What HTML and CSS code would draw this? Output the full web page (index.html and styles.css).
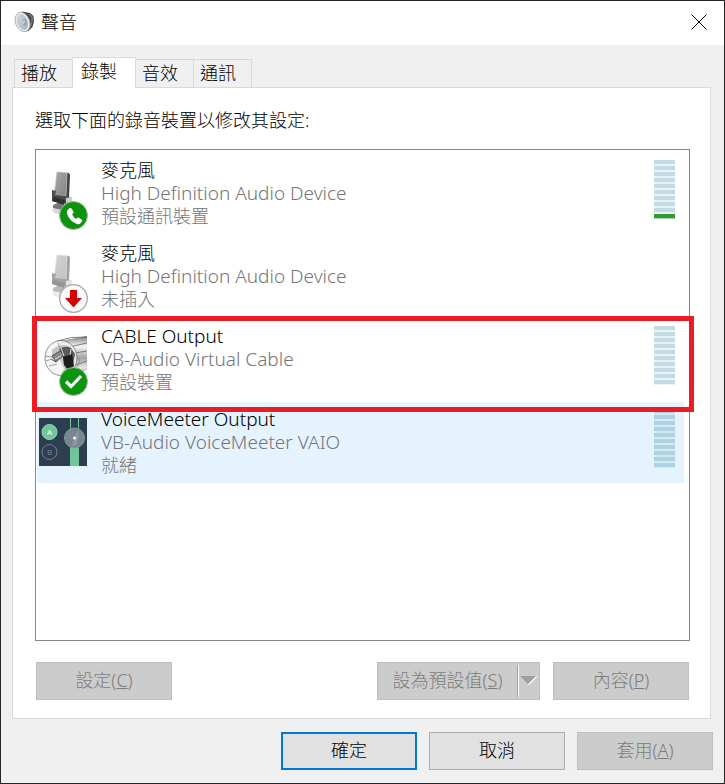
FILE: index.html
```html
<!DOCTYPE html>
<html lang="zh-Hant">
<head>
<meta charset="utf-8">
<meta name="viewport" content="width=device-width, initial-scale=1">
<title>聲音</title>
<link rel="stylesheet" href="styles.css">
</head>
<body>
<svg class="defs" aria-hidden="true">
  <defs>
    <linearGradient id="metal" x1="0" y1="0" x2="1" y2="1"><stop offset="0" stop-color="#a8a8a8"/><stop offset="1" stop-color="#858585"/></linearGradient>
    <linearGradient id="cone" x1="0" y1="0" x2="1" y2="1"><stop offset="0" stop-color="#d3dde3"/><stop offset="1" stop-color="#9db0bb"/></linearGradient>
    <linearGradient id="pipe" x1="0" y1="0" x2="0" y2="1"><stop offset="0" stop-color="#777"/><stop offset=".25" stop-color="#f5f5f5"/><stop offset=".55" stop-color="#a5a5a5"/><stop offset=".8" stop-color="#e6e6e6"/><stop offset="1" stop-color="#555"/></linearGradient>
    <symbol id="mic" viewBox="0 0 48 48">
      <path d="M13 40l8-3 8 4-3 5-11-2z" fill="#d8d8d8"/>
      <path d="M14 36l7-3 4 3-2 5-4-1-5-1z" fill="#777"/>
      <path d="M18 3l12 1 1 2-1 23H16z" fill="#444"/>
      <path d="M18 3l10 1-1 23-12-1z" fill="url(#metal)" stroke="#ccc" stroke-width=".7"/>
      <path d="M13 21l4 1-1 4 11 1 6 2v5l-6 1-14-3z" fill="#4c4c4c"/>
      <path d="M15 28l11 3-1 5-12-4z" fill="#303030"/>
      <path d="M27 29l6-1v5l-6 1z" fill="#ccc"/>
    </symbol>
  </defs>
</svg>
<main class="window">
  <header class="titlebar">
    <svg class="titlebar-icon" viewBox="0 0 22 24" aria-hidden="true">
      <path d="M8 1.500l8 1.500 3.500 3 .5 6-1.500 5-4 4-5 1z" fill="#4b4b4b"/>
      <path d="M15 4l3 3v5l-3 7" fill="none" stroke="#8b8b8b"/>
      <ellipse cx="8.500" cy="12" rx="7" ry="10" transform="rotate(-20 8.500 12)" fill="#f1f1f1" stroke="#a6a6a6" stroke-width=".8"/>
      <ellipse cx="8.300" cy="12" rx="5.400" ry="8.200" transform="rotate(-20 8.300 12)" fill="url(#cone)"/>
      <ellipse cx="10.500" cy="12.500" rx="2.200" ry="3" fill="#8da0ac"/>
      <path d="M8 11l4 0-3 4z" fill="#c6d3da"/>
    </svg>
    <h1 class="title">聲音</h1>
    <button class="close" type="button" aria-label="關閉">
      <svg viewBox="0 0 16 16" aria-hidden="true"><path d="M.5 .5l15 15M15.500 .5l-15 15" stroke="#000"/></svg>
    </button>
  </header>
  <div class="content">
    <div class="tabs" role="tablist">
      <button class="tab" type="button" role="tab">播放</button>
      <button class="tab tab-active" type="button" role="tab" aria-selected="true">錄製</button>
      <button class="tab" type="button" role="tab">音效</button>
      <button class="tab" type="button" role="tab">通訊</button>
    </div>
    <section class="panel" role="tabpanel">
      <p class="prompt" id="prompt">選取下面的錄音裝置以修改其設定:</p>
      <ul class="devices" role="listbox" aria-labelledby="prompt">
        <li class="device" role="option">
          <div class="picture">
            <svg class="device-icon" viewBox="0 0 48 48" aria-hidden="true"><use href="#mic"/></svg>
            <svg class="badge" viewBox="0 0 30 30" aria-hidden="true">
              <circle cx="14.500" cy="14.500" r="14" fill="#0c930f" stroke="#a9b9a9"/>
              <path d="M8.400 9.200l2.300-2.100q1-.6 1.800.4l2 3q.5 1-.3 1.800l-1.100 1.100q1.200 2.900 4 4.500l1.300-1.100q.8-.6 1.700 0l2.700 2q.9.8.2 1.700l-1.800 2.100q-1.200 1.100-3.300.3-7.500-2.800-9.900-10.200-.6-2 .4-3.500z" fill="#fff"/>
            </svg>
          </div>
          <div class="text"><span class="name">麥克風</span><span class="latin">High Definition Audio Device</span><span>預設通訊裝置</span></div>
          <div class="meter meter-live"><i></i><i></i><i></i><i></i><i></i><i></i><i></i><i></i><i></i><i></i></div>
        </li>
        <li class="device" role="option">
          <div class="picture">
            <svg class="device-icon faded" viewBox="0 0 48 48" aria-hidden="true"><use href="#mic"/></svg>
            <svg class="badge" viewBox="0 0 30 30" aria-hidden="true">
              <circle cx="14.500" cy="14.500" r="13.800" fill="#fafafa" stroke="#a8a8a8" stroke-width="1.300"/>
              <path d="M11 6h7v8h5l-8.500 9.500L6 14h5z" fill="#d90000"/>
            </svg>
          </div>
          <div class="text"><span class="name">麥克風</span><span class="latin">High Definition Audio Device</span><span>未插入</span></div>
        </li>
        <li class="device device-marked" role="option">
          <div class="picture">
            <svg class="device-icon" viewBox="0 0 48 48" aria-hidden="true">
              <path d="M20 6L48 1v34l-24 6z" fill="url(#pipe)"/>
              <path d="M18 6q14-5 30-4M30 12l18-4M36 18l12-2M34 31l14-5" fill="none" stroke="#666" stroke-width=".8"/>
              <ellipse cx="22" cy="23" rx="16" ry="17.500" fill="#f3f3f3" fill-opacity=".8" stroke="#777" stroke-width=".8"/>
              <path d="M13 15q8-7 17-4l6 8-2 14-8 3-7-16-6 3z" fill="#c4c4c4"/>
              <path d="M20 14q7-4 12-1l4 6-2 9-8 1-3-10z" fill="#5a5a5a"/>
              <path d="M24 22l9-3 2 12-6 4-4-5z" fill="#1d1d1d"/>
              <path d="M13 21l8-5 4 4-8 7zM12 24l5 3" fill="#8a8a8a" stroke="#333" stroke-width=".8"/>
              <path d="M22 13l3 8M32 14l-1 6M16 24l6-3" fill="none" stroke="#ddd"/>
              <path d="M6 21l8 1M7 26l6-2M10 31l8-2M19 8l2 5M37 20l4 6-3 6" stroke="#888" stroke-width=".8" fill="none"/>
            </svg>
            <svg class="badge" viewBox="0 0 30 30" aria-hidden="true">
              <circle cx="14.500" cy="14.500" r="14" fill="#0c930f" stroke="#a9b9a9"/>
              <path d="M7 14.500l5 5L22 9" fill="none" stroke="#fff" stroke-width="3.200"/>
            </svg>
          </div>
          <div class="text"><span class="name latin">CABLE Output</span><span class="latin">VB-Audio Virtual Cable</span><span>預設裝置</span></div>
          <div class="meter"><i></i><i></i><i></i><i></i><i></i><i></i><i></i><i></i><i></i><i></i></div>
        </li>
        <li class="device device-selected" role="option" aria-selected="true">
          <div class="picture">
            <svg class="device-icon" viewBox="0 0 48 48" aria-hidden="true">
              <path d="M0 0h48v48H0z" fill="#2c3e50"/>
              <path d="M31 29h9v19h-9z" fill="#71c598"/>
              <path d="M31.500 0v30M39.500 0v30" stroke="#71c598"/>
              <circle cx="10.500" cy="14" r="7.500" fill="#71c598" stroke="#8be0b3"/>
              <circle cx="10.500" cy="34" r="7.500" fill="none" stroke="#71838f"/>
              <circle cx="35.500" cy="20" r="10" fill="#7c848f" stroke="#71a394"/>
              <path d="M33 28l3-10 3-6 1 6-3 10z" fill="#8f98a1"/>
              <circle cx="35.500" cy="20" r="1.500" fill="#fff"/>
              <text x="10.500" y="17" text-anchor="middle" class="glyph" fill="#fff">A</text>
              <text x="10.500" y="37" text-anchor="middle" class="glyph" fill="#71838f">B</text>
            </svg>
          </div>
          <div class="text"><span class="name latin">VoiceMeeter Output</span><span class="latin">VB-Audio VoiceMeeter VAIO</span><span>就緒</span></div>
          <div class="meter"><i></i><i></i><i></i><i></i><i></i><i></i><i></i><i></i><i></i><i></i></div>
        </li>
      </ul>
      <div class="actions">
        <button class="button" type="button" disabled>設定(<u>C</u>)</button>
        <div class="split">
          <button class="split-main" type="button" disabled>設為預設值(<u>S</u>)</button>
          <button class="split-arrow" type="button" disabled aria-label="更多選項">
            <svg viewBox="0 0 18 10" aria-hidden="true"><path d="M8 8L16 0l1 1-8 8z" fill="#fff"/><path d="M0 0h16l-8 8z" fill="#a0a0a0"/></svg>
          </button>
        </div>
        <button class="button" type="button" disabled>內容(<u>P</u>)</button>
      </div>
    </section>
    <footer class="footer">
      <button class="button button-default" type="button">確定</button>
      <button class="button" type="button">取消</button>
      <button class="button" type="button" disabled>套用(<u>A</u>)</button>
    </footer>
  </div>
</main>
</body>
</html>
```
FILE: styles.css
```css
* { box-sizing: border-box; }

body, button {
  font: 300 18px/23px "Noto Sans", "Noto Sans CJK TC", sans-serif;
}

body { margin: 0; color: #000; }
button { margin: 0; padding: 0; border: 0; background: none; color: inherit; }
.defs { position: absolute; width: 0; height: 0; }

.window {
  display: flex;
  flex-direction: column;
  min-height: 100vh;
  border: 1px solid #262426;
  background: #f0f0f0;
}

.titlebar {
  display: flex;
  align-items: center;
  height: 44px;
  padding: 0 17px 2px 13px;
  background: #fff;
}
.titlebar-icon { width: 22px; height: 24px; }
.title { flex: 1; margin: 0 0 0 5px; font: inherit; }
.close { display: flex; }
.close svg { width: 16px; height: 16px; }

.content {
  flex: 1;
  display: flex;
  flex-direction: column;
  padding: 12px 11px 13px;
}

.tabs { display: flex; align-items: flex-end; padding-left: 2px; }
.tab {
  width: 58px;
  height: 28px;
  padding-left: 6px;
  border: 1px solid #d9d9d9;
  border-width: 1px 1px 0 0;
  text-align: left;
}
.tab:first-child { border-width: 1px 0 0 1px; }
.tab-active {
  width: 64px;
  height: 31px;
  margin-bottom: -1px;
  padding: 0 8px 3px;
  border-left-width: 1px;
  background: #fff;
  z-index: 1;
}

.panel {
  flex: 1;
  display: flex;
  flex-direction: column;
  margin-right: 2px;
  padding: 21px 20px 18px 22px;
  border: 1px solid #d9d9d9;
  background: #fff;
}
.prompt { margin: 0 0 17px; }

.devices {
  flex: 1;
  display: flex;
  flex-direction: column;
  gap: 2px;
  margin: 0;
  padding: 3px 5px 3px 1px;
  border: 1px solid #828790;
  list-style: none;
}
.device {
  position: relative;
  display: flex;
  align-items: flex-start;
  height: 81px;
  padding: 6px 9px 6px 2px;
}
.device-selected { background: #e5f3ff; }
.device-marked::after {
  content: "";
  position: absolute;
  z-index: 1;
  inset: -3px -10px -12px -5px;
  border: 5px solid #ed1c24;
}
.picture { position: relative; width: 48px; height: 48px; margin: 10px 14px 0 0; }
.device-icon { display: block; width: 48px; height: 48px; }
.faded { opacity: .5; }
.badge { position: absolute; left: 20px; top: 32px; width: 30px; height: 30px; }
.glyph { font: 8px "Open Sans", sans-serif; }

.text {
  flex: 1;
  display: flex;
  flex-direction: column;
  color: #757575;
}
.name { color: #000; }
.latin { font-size: 19px; }

.meter { width: 21px; margin-top: 1px; }
.meter i {
  display: block;
  height: 6px;
  border-bottom: 2px solid #e9f2f5;
  background: #c3dce3;
}
.meter i:last-child { height: 5px; border-bottom-width: 1px; }
.meter-live i:last-child { background: #339933; border-color: #a9d3ac; }
.device-selected .meter i { background: #aed2e2; border-color: #d3e9f3; }

.actions { display: flex; gap: 13px; margin-top: 21px; padding: 0 1px; }
.button {
  width: 136px;
  height: 38px;
  padding: 0 0 2px;
  border: 1px solid #adadad;
  background: #e1e1e1;
}
.button:disabled, .split { border: 1px solid #bfbfbf; background: #ccc; color: #7c7c7c; }
.button-default { border: 2px solid #0078d7; }
.split { display: flex; width: 163px; height: 38px; margin-left: auto; }
.split button { color: #7c7c7c; }
.split-main { flex: 1; padding: 0 0 2px; }
.split-arrow {
  display: flex;
  align-items: center;
  justify-content: center;
  width: 22px;
  margin: 2px 0;
  border-left: 1px solid #a0a0a0;
  box-shadow: inset 1px 0 #fff;
}
.split-arrow svg { width: 18px; height: 10px; }

.footer { display: flex; justify-content: flex-end; gap: 12px; margin-top: 13px; }
```
